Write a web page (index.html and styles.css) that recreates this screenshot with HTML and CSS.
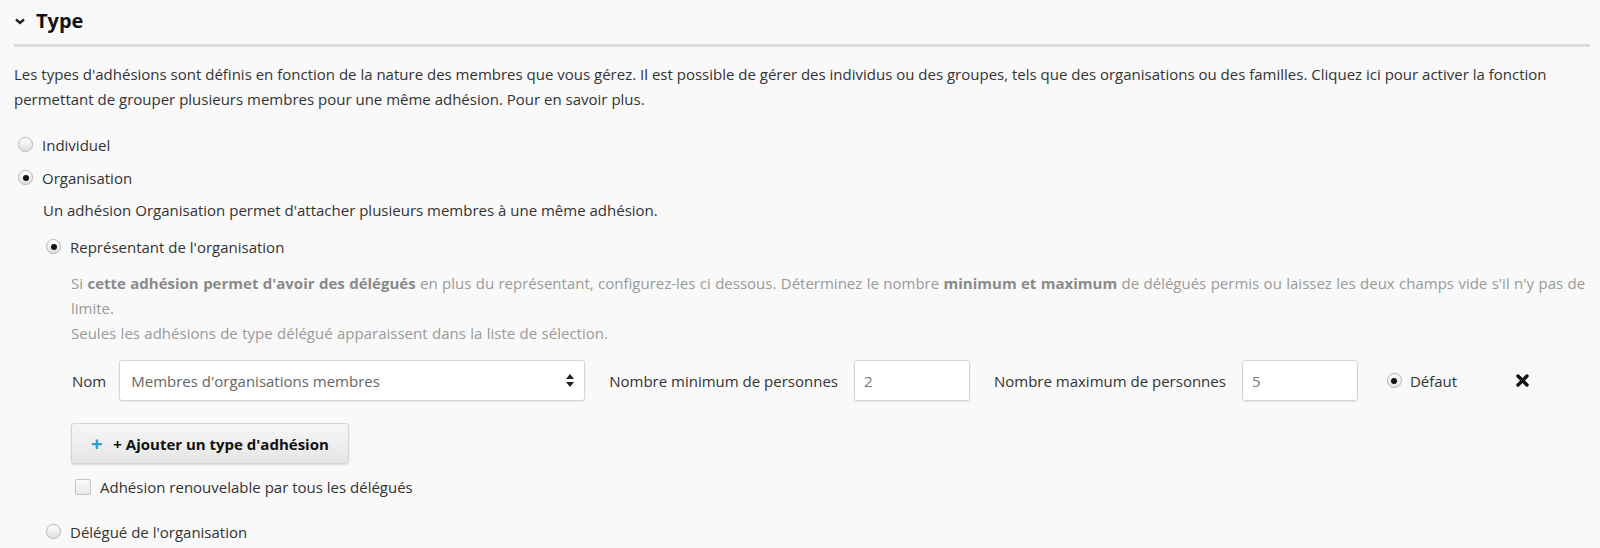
FILE: index.html
```html
<!DOCTYPE html>
<html lang="fr">
<head>
    <meta charset="UTF-8">
    <title>Type d'adhésion</title>
    <link rel="stylesheet" href="styles.css">
</head>
<body>
    <div class="section">
        <h2 class="section-title">
            <svg class="chevron" width="10" height="7" viewBox="0 0 10 7"><path d="M1 1.5 L5 5 L9 1.5" fill="none" stroke="#222" stroke-width="2.4"/></svg>
            Type
        </h2>

        <p class="intro">Les types d'adhésions sont définis en fonction de la nature des membres que vous gérez. Il est possible de gérer des individus ou des groupes, tels que des organisations ou des familles. Cliquez ici pour activer la fonction permettant de grouper plusieurs membres pour une même adhésion. Pour en savoir plus.</p>

        <div class="options">
            <label class="option"><span class="radio"></span>Individuel</label>
            <label class="option"><span class="radio checked"></span>Organisation</label>

            <div class="sub">
                <p class="sub-text">Un adhésion Organisation permet d'attacher plusieurs membres à une même adhésion.</p>

                <label class="option option-rep"><span class="radio checked"></span>Représentant de l'organisation</label>

                <div class="delegates">
                    <p class="help">Si <b>cette adhésion permet d'avoir des délégués</b> en plus du représentant, configurez-les ci dessous. Déterminez le nombre <b>minimum et maximum</b> de délégués permis ou laissez les deux champs vide s'il n'y pas de limite.<br>Seules les adhésions de type délégué apparaissent dans la liste de sélection.</p>

                    <div class="row">
                        <span class="field-label">Nom</span>
                        <div class="select">
                            <span>Membres d'organisations membres</span>
                            <svg width="8" height="13" viewBox="0 0 8 13"><path d="M4 0 L8 5 L0 5 Z M0 8 L8 8 L4 13 Z" fill="#222"/></svg>
                        </div>
                        <span class="field-label wide">Nombre minimum de personnes</span>
                        <div class="input">2</div>
                        <span class="field-label wide">Nombre maximum de personnes</span>
                        <div class="input">5</div>
                        <label class="option option-default"><span class="radio checked"></span>Défaut</label>
                        <svg class="remove" width="13" height="13" viewBox="0 0 13 13"><path d="M2 2 L11 11 M11 2 L2 11" stroke="#111" stroke-width="3.4" stroke-linecap="round"/></svg>
                    </div>

                    <button class="btn-add"><span class="plus">+</span> + Ajouter un type d'adhésion</button>

                    <label class="check"><span class="checkbox"></span>Adhésion renouvelable par tous les délégués</label>
                </div>

                <label class="option option-del"><span class="radio"></span>Délégué de l'organisation</label>
            </div>
        </div>
    </div>
</body>
</html>
```

FILE: styles.css
```css
body {
    margin: 0;
    background-color: #f9f9f9;
    font-family: "Open Sans", Arial, sans-serif;
    font-size: 15px;
    color: #333;
}
.section {
    padding: 0 10px 0 14px;
}
.section-title {
    display: flex;
    align-items: center;
    gap: 11px;
    margin: 0;
    padding: 8px 0 10px;
    font-size: 20px;
    line-height: 26px;
    font-weight: 700;
    color: #111;
    border-bottom: 3px solid #dcdcdc;
}
.chevron {
    margin-left: 1px;
}
.intro {
    margin: 15px 0 0;
    line-height: 25px;
}
.options {
    margin-top: 16px;
    display: flex;
    flex-direction: column;
}
.option {
    display: flex;
    align-items: center;
    gap: 9px;
    height: 33px;
    padding-left: 4px;
}
.radio {
    width: 13px;
    height: 13px;
    border: 1px solid #b8b8b8;
    border-radius: 50%;
    background: linear-gradient(#ffffff, #e0e0e0);
    box-shadow: 0 0 1px rgba(0,0,0,0.15);
    display: flex;
    align-items: center;
    justify-content: center;
}
.radio.checked::after {
    content: "";
    width: 6px;
    height: 6px;
    border-radius: 50%;
    background: #111;
}
.sub {
    padding-left: 28px;
}
.sub-text {
    margin: 0 0 0 1px;
    line-height: 32px;
}
.option-rep {
    height: 37px;
    margin-top: 2px;
}
.delegates {
    padding-left: 29px;
}
.help {
    margin: 6px 0 0;
    line-height: 25px;
    color: #9a9a9a;
    word-spacing: 0.5px;
}
.help b {
    color: #8a8a8a;
}
.row {
    display: flex;
    align-items: center;
    margin-top: 14px;
    height: 41px;
}
.field-label {
    margin-right: 13px;
    padding-left: 1px;
}
.field-label.wide {
    margin-left: 24px;
    margin-right: 16px;
    padding-left: 0;
}
.select {
    box-sizing: border-box;
    width: 466px;
    height: 41px;
    display: flex;
    align-items: center;
    justify-content: space-between;
    padding: 0 10px 0 11px;
    background: #fff;
    border: 1px solid #d6d6d6;
    border-radius: 3px;
    box-shadow: 0 1px 2px rgba(0,0,0,0.08);
    color: #666;
}
.input {
    box-sizing: border-box;
    width: 116px;
    height: 41px;
    display: flex;
    align-items: center;
    padding-left: 9px;
    background: #fff;
    border: 1px solid #d6d6d6;
    border-radius: 3px;
    box-shadow: 0 1px 2px rgba(0,0,0,0.08);
    color: #777;
}
.row .field-label.wide + .input + .field-label.wide {
    margin-right: 16px;
}
.option-default {
    margin-left: 25px;
    padding-left: 4px;
    gap: 8px;
    height: 41px;
    color: #333;
}
.remove {
    margin-left: 59px;
}
.btn-add {
    display: block;
    margin-top: 22px;
    width: 278px;
    height: 41px;
    font-family: inherit;
    font-size: 15px;
    font-weight: 700;
    color: #111;
    background: linear-gradient(#f6f6f6, #e6e6e6);
    border: 1px solid #d4d4d4;
    border-radius: 3px;
    box-shadow: 0 1px 2px rgba(0,0,0,0.12);
    text-align: left;
    padding-left: 19px;
}
.btn-add .plus {
    color: #2a9fd6;
    font-size: 20px;
    margin-right: 7px;
    vertical-align: -1px;
}
.check {
    display: flex;
    align-items: center;
    gap: 9px;
    height: 20px;
    margin-top: 13px;
    padding-left: 4px;
}
.checkbox {
    width: 14px;
    height: 14px;
    border: 1px solid #c4c4c4;
    border-radius: 2px;
    background: linear-gradient(#fafafa, #e8e8e8);
}
.option-del {
    margin-top: 18px;
}
```
